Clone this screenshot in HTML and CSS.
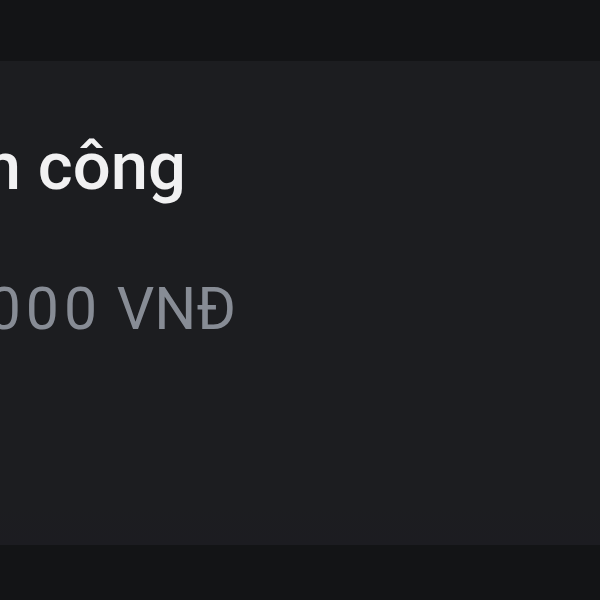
FILE: index.html
```html
<!DOCTYPE html>
<html lang="vi">
<head>
    <meta charset="UTF-8">
    <meta name="viewport" content="width=device-width, initial-scale=1.0">
    <title>Thanh toán thành công</title>
    <link rel="stylesheet" href="styles.css">
</head>
<body>

    <div class="page">
        <div class="card">
            <div class="row title-row">
                <span class="title">Thanh toán thành công</span>
            </div>
            <div class="row amount-row">
                <span class="amount"><span class="digits">50000</span> VNĐ</span>
            </div>
        </div>
    </div>

</body>
</html>
```

FILE: styles.css
```css
html, body {
    margin: 0;
    height: 100%;
    background-color: #131416;
}
body {
    font-family: Roboto, "Noto Sans", sans-serif;
    overflow: hidden;
}
.page {
    padding-top: 61px;
}
.card {
    height: 484px;
    background: linear-gradient(to bottom, #1c1d20 0%, #1c1d20 92%, #1c1c21 100%);
    padding-top: 65px;
    box-sizing: border-box;
}
.row {
    display: flex;
    justify-content: flex-end;
    white-space: nowrap;
}
.title-row {
    width: 186px;
}
.title {
    font-size: 67px;
    font-weight: 500;
    line-height: 80px;
    color: #f1f1f2;
}
.amount-row {
    width: 236px;
    margin-top: 69px;
}
.amount {
    font-size: 59px;
    font-weight: 400;
    line-height: 68px;
    color: #878c95;
}
.digits {
    letter-spacing: 5px;
}
```
